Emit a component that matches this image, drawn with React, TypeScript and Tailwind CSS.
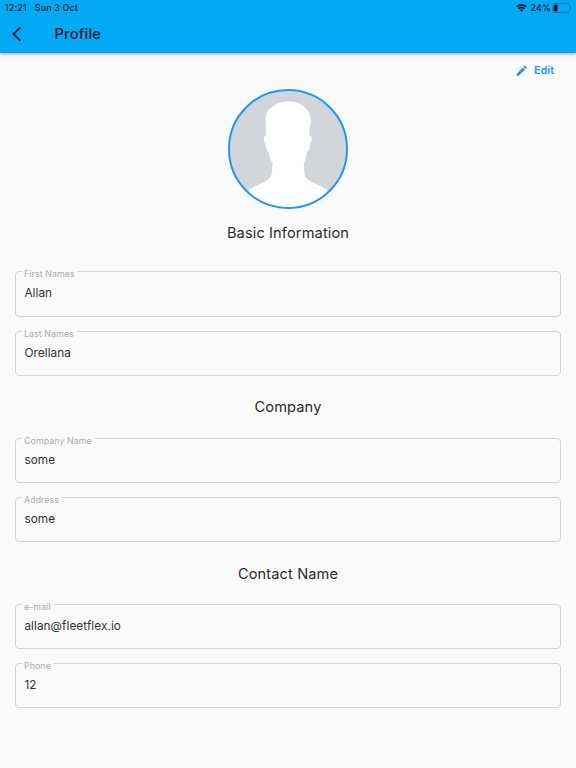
import type { ReactNode } from "react";
import { MdEdit } from "react-icons/md";

type FieldProps = {
  label: string;
  value: string;
};

function Field({ label, value }: FieldProps) {
  return (
    <fieldset className="h-[45.2px] rounded-[4px] border border-[#d4d4d4] pl-[3px]">
      <legend className="ml-[3px] h-px pl-[2px] pr-[3px] text-[8.8px] leading-[5px] tracking-[0.09px] text-[#acacac]">
        {label}
      </legend>
      <p className="pl-[5.4px] pt-[12px] text-[11.8px] leading-[18px] tracking-[0.06px] text-[#333333]">{value}</p>
    </fieldset>
  );
}

type SectionProps = {
  title: string;
  bodyClass?: string;
  children: ReactNode;
};

function Section({ title, bodyClass = "mt-[18.6px]", children }: SectionProps) {
  return (
    <section className="mb-[19.4px]">
      <h2 className="text-center text-[14.6px] leading-[24px] tracking-[0.12px] text-[#2b2b2b]">{title}</h2>
      <div className={`flex flex-col gap-[14px] ${bodyClass}`}>{children}</div>
    </section>
  );
}

function StatusBar() {
  return (
    <div className="flex h-4 items-center justify-between pl-[5px] pr-[4px] text-[9px] font-medium leading-4 tracking-[0.1px]">
      <div className="flex gap-2">
        <span>12:21</span>
        <span className="tracking-[0.1px]">Sun 3 Oct</span>
      </div>
      <div className="flex items-center">
        <svg width="11" height="8" viewBox="0 0 11 8" fill="none" stroke="#061b28" strokeWidth="1.8">
          <path d="M.6 2.9a7 7 0 0 1 9.8 0M2.4 4.8a4.4 4.4 0 0 1 6.2 0" />
          <path d="M3.9 6.1a2.3 2.3 0 0 1 3.2 0L5.5 7.8z" fill="#061b28" stroke="none" />
        </svg>
        <span className="ml-[3px]">24%</span>
        <svg className="ml-px" width="20" height="10" viewBox="0 0 20 10">
          <rect x=".7" y=".7" width="17" height="8.6" rx="2.4" fill="none" stroke="#086b9e" strokeWidth=".9" />
          <rect x="1.7" y="1.8" width="3.8" height="6.4" rx="1" fill="#03131d" />
          <path d="M18.7 3.4c1.1.5 1.1 2.7 0 3.2z" fill="#086b9e" />
        </svg>
      </div>
    </div>
  );
}

function Avatar() {
  return (
    <div className="mx-auto h-[120px] w-[120px] overflow-hidden rounded-full border-2 border-[#2196f3] bg-[#d2d6db]">
      <svg width="116" height="116" viewBox="2 2 116 116">
        <path
          fill="#fff"
          d="M60 12.5C67 12 76 15 80 22C83 27 82.5 31 83.2 34L81.8 36.5L81.5 47C83.7 47 84.2 49 83.2 52L81.2 60C80.7 62 79.8 62.5 79 62.7C78.5 67 77.5 71 75.8 74L76.3 84C76.5 89 81 91.5 86 94L99 100.5V120H21V100.5L36 93C41 90 43.5 88 43.9 84L44.6 74C42.4 71 41.2 67 40.7 62.7C39.5 62.5 38.8 61.5 38.5 60L36 51C35.3 48 36 46.5 38.3 47L37.8 35C37.5 27 38.5 21 43.5 18.2C47 17.5 47.5 14.5 52 13.5C55 12.5 57 12.7 60 12.5Z"
        />
      </svg>
    </div>
  );
}

export default function App() {
  return (
    <div className="flex h-[768px] w-full flex-col bg-[#fafafa] font-['Inter','Liberation_Sans',sans-serif]">
      <header className="h-[52.5px] shrink-0 bg-[#03a9f4] text-[#061b28] shadow-[0_1px_3px_rgba(0,0,0,0.35)]">
        <StatusBar />
        <div className="flex h-9 items-center pl-[11px]">
          <svg width="11" height="16" viewBox="0 0 11 16" fill="none" stroke="#061b28" strokeWidth="1.8">
            <path d="M9.3 1.4 2.4 8l6.9 6.6" />
          </svg>
          <h1 className="ml-[32.5px] pt-[2px] text-[14.6px] font-medium tracking-[0.22px]">Profile</h1>
        </div>
      </header>

      <main className="flex flex-col px-[15px]">
        <div className="flex h-[36px] items-center justify-end pr-[7px]">
          <button className="flex items-center gap-[6px] pt-px text-[10.8px] font-semibold text-[#2196f3]">
            <MdEdit size={13.5} />
            Edit
          </button>
        </div>
        <Avatar />
        <div className="pt-[12px]">
          <Section title="Basic Information" bodyClass="mt-[26.9px]">
            <Field label="First Names" value="Allan" />
            <Field label="Last Names" value="Orellana" />
          </Section>
          <Section title="Company">
            <Field label="Company Name" value="some" />
            <Field label="Address" value="some" />
          </Section>
          <Section title="Contact Name">
            <Field label="e-mail" value="allan@fleetflex.io" />
            <Field label="Phone" value="12" />
          </Section>
        </div>
      </main>
    </div>
  );
}
